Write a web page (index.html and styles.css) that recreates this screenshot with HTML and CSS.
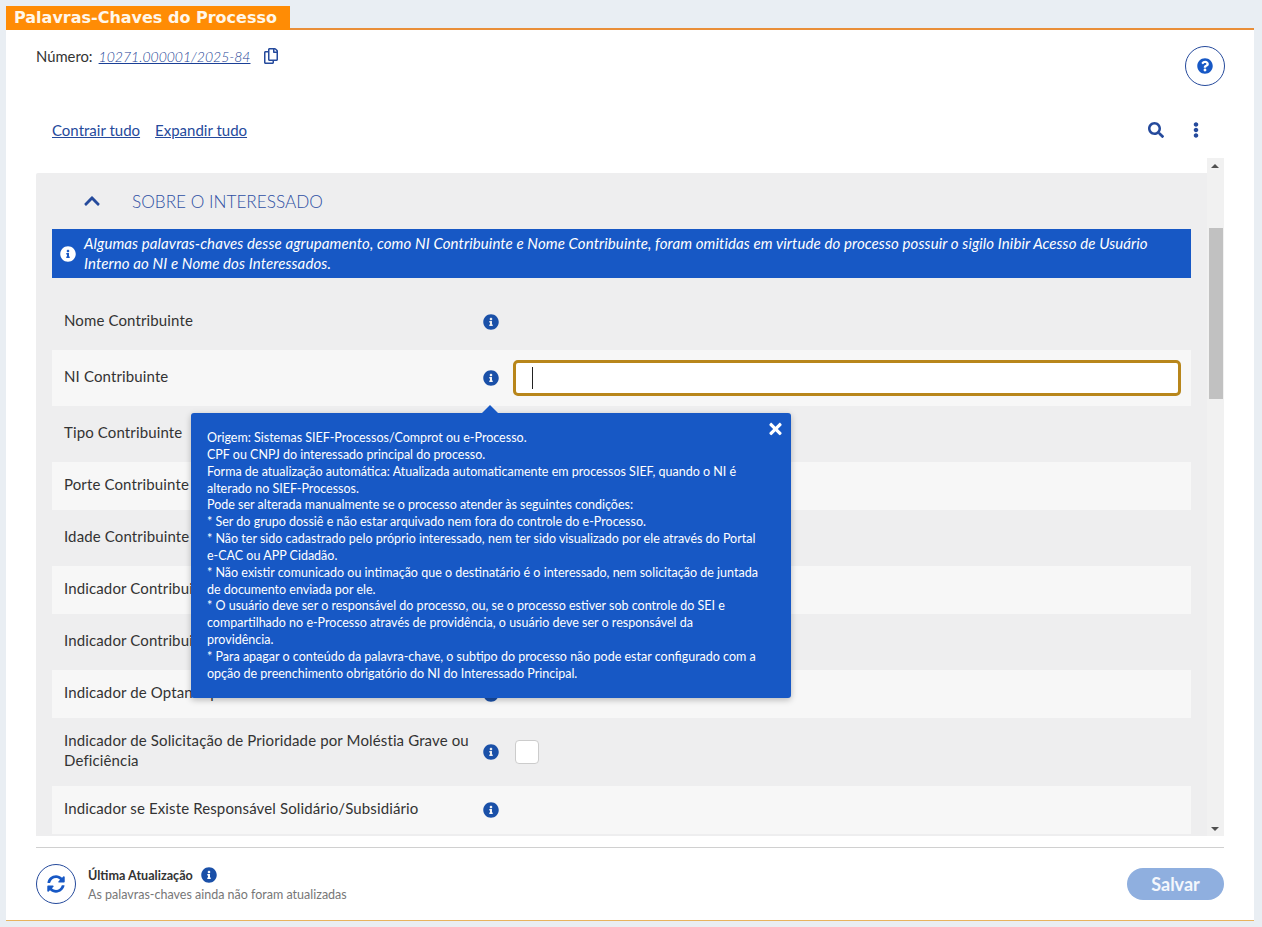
FILE: index.html
```html
<!DOCTYPE html>
<html lang="pt-BR">
<head>
<meta charset="utf-8">
<title>Palavras-Chaves do Processo</title>
<link rel="stylesheet" href="styles.css">
</head>
<body>
<svg class="defs" aria-hidden="true">
<symbol id="i-info" viewBox="0 0 512 512"><path fill="currentColor" d="M256 8C119.043 8 8 119.083 8 256c0 136.997 111.043 248 248 248s248-111.003 248-248C504 119.083 392.957 8 256 8zm0 110c23.196 0 42 18.804 42 42s-18.804 42-42 42-42-18.804-42-42 18.804-42 42-42zm56 254c0 6.627-5.373 12-12 12h-88c-6.627 0-12-5.373-12-12v-24c0-6.627 5.373-12 12-12h12v-64h-12c-6.627 0-12-5.373-12-12v-24c0-6.627 5.373-12 12-12h64c6.627 0 12 5.373 12 12v100h12c6.627 0 12 5.373 12 12v24z"/></symbol>
<symbol id="i-help" viewBox="0 0 512 512"><path fill="currentColor" d="M504 256c0 136.997-111.043 248-248 248S8 392.997 8 256C8 119.083 119.043 8 256 8s248 111.083 248 248zM262.655 90c-54.497 0-89.255 22.957-116.549 63.758-3.536 5.286-2.353 12.415 2.715 16.258l34.699 26.31c5.205 3.947 12.621 3.008 16.665-2.122 17.864-22.658 30.113-35.797 57.303-35.797 20.429 0 45.698 13.148 45.698 32.958 0 14.976-12.363 22.667-32.534 33.976C247.128 238.528 216 254.941 216 296v4c0 6.627 5.373 12 12 12h56c6.627 0 12-5.373 12-12v-1.333c0-28.462 83.186-29.647 83.186-106.667 0-58.002-60.165-102-116.531-102zM256 338c-25.365 0-46 20.635-46 46 0 25.364 20.635 46 46 46s46-20.636 46-46c0-25.365-20.635-46-46-46z"/></symbol>
<symbol id="i-search" viewBox="0 0 512 512"><path fill="currentColor" d="M505 442.7L405.3 343c-4.5-4.5-10.6-7-17-7H372c27.6-35.3 44-79.7 44-128C416 93.1 322.9 0 208 0S0 93.1 0 208s93.1 208 208 208c48.3 0 92.7-16.4 128-44v16.3c0 6.4 2.5 12.5 7 17l99.7 99.7c9.4 9.4 24.6 9.4 33.9 0l28.3-28.3c9.4-9.4 9.4-24.6.1-34zM208 336c-70.7 0-128-57.2-128-128 0-70.7 57.2-128 128-128 70.7 0 128 57.2 128 128 0 70.7-57.2 128-128 128z"/></symbol>
<symbol id="i-dots" viewBox="0 0 192 512"><path fill="currentColor" d="M96 184c39.8 0 72 32.2 72 72s-32.2 72-72 72-72-32.2-72-72 32.2-72 72-72zM24 80c0 39.8 32.2 72 72 72s72-32.2 72-72S135.8 8 96 8 24 40.2 24 80zm0 352c0 39.8 32.2 72 72 72s72-32.2 72-72-32.2-72-72-72-72 32.2-72 72z"/></symbol>
<symbol id="i-sync" viewBox="0 0 512 512"><path fill="currentColor" d="M370.72 133.28C339.458 104.008 298.888 87.962 255.848 88c-77.458.068-144.328 53.178-162.791 126.85-1.344 5.363-6.122 9.15-11.651 9.15H24.103c-7.498 0-13.194-6.807-11.807-14.176C33.933 94.924 134.813 8 256 8c66.448 0 126.791 26.136 171.315 68.685L463.03 40.97C478.149 25.851 504 36.559 504 57.941V192c0 13.255-10.745 24-24 24H345.941c-21.382 0-32.09-25.851-16.971-40.971l41.75-41.749zM32 296h134.059c21.382 0 32.09 25.851 16.971 40.971l-41.75 41.75c31.262 29.273 71.835 45.319 114.876 45.28 77.418-.07 144.315-53.144 162.787-126.849 1.344-5.363 6.122-9.15 11.651-9.15h57.304c7.498 0 13.194 6.807 11.807 14.176C478.067 417.076 377.187 504 256 504c-66.448 0-126.791-26.136-171.315-68.685L48.97 471.03C33.851 486.149 8 475.441 8 454.059V320c0-13.255 10.745-24 24-24z"/></symbol>
<symbol id="i-times" viewBox="0 0 352 512"><path fill="currentColor" d="M242.72 256l100.07-100.07c12.28-12.28 12.28-32.19 0-44.48l-22.24-22.24c-12.28-12.28-32.19-12.28-44.48 0L176 189.28 75.93 89.21c-12.28-12.28-32.19-12.28-44.48 0L9.21 111.45c-12.28 12.28-12.28 32.19 0 44.48L109.28 256 9.21 356.07c-12.28 12.28-12.28 32.19 0 44.48l22.24 22.24c12.28 12.28 32.2 12.28 44.48 0L176 322.72l100.07 100.07c12.28 12.28 32.2 12.28 44.48 0l22.24-22.24c12.28-12.28 12.28-32.19 0-44.48L242.72 256z"/></symbol>
<symbol id="i-up" viewBox="0 0 448 512"><path fill="currentColor" d="M240.971 130.524l194.343 194.343c9.373 9.373 9.373 24.569 0 33.941l-22.667 22.667c-9.357 9.357-24.522 9.375-33.901.04L224 227.495 69.255 381.516c-9.379 9.335-24.544 9.317-33.901-.04l-22.667-22.667c-9.373-9.373-9.373-24.569 0-33.941L207.03 130.525c9.372-9.373 24.568-9.373 33.941-.001z"/></symbol>
<symbol id="i-copy" viewBox="0 0 448 512"><path fill="currentColor" d="M433.941 65.941l-51.882-51.882A48 48 0 0 0 348.118 0H176c-26.51 0-48 21.49-48 48v48H48c-26.51 0-48 21.49-48 48v320c0 26.51 21.49 48 48 48h224c26.51 0 48-21.49 48-48v-48h80c26.51 0 48-21.49 48-48V99.882a48 48 0 0 0-14.059-33.941zM266 464H54a6 6 0 0 1-6-6V150a6 6 0 0 1 6-6h74v224c0 26.51 21.49 48 48 48h96v42a6 6 0 0 1-6 6zm128-96H182a6 6 0 0 1-6-6V54a6 6 0 0 1 6-6h106v88c0 13.255 10.745 24 24 24h88v202a6 6 0 0 1-6 6zm6-256h-64V48h9.632c1.591 0 3.117.632 4.243 1.757l48.368 48.368a6 6 0 0 1 1.757 4.243V112z"/></symbol>
</svg>

<main class="window">
  <h1 class="tab"><span class="tab-label">Palavras-Chaves do Processo</span></h1>
  <section class="card">
    <div class="top">
      <div class="numero">
        <span class="numero-label">Número:</span>
        <a class="numero-link" href="#">10271.000001/2025-84</a>
        <svg class="icon-copy"><use href="#i-copy"/></svg>
      </div>
      <button class="help" type="button"><svg class="icon-help"><use href="#i-help"/></svg></button>
    </div>
    <div class="toolbar">
      <div class="toolbar-links"><a href="#">Contrair tudo</a><a href="#">Expandir tudo</a></div>
      <div class="toolbar-icons">
        <svg class="icon-search"><use href="#i-search"/></svg>
        <svg class="icon-dots"><use href="#i-dots"/></svg>
      </div>
    </div>
    <div class="scroller">
      <div class="content">
        <div class="panel">
          <div class="panel-head">
            <svg class="icon-up"><use href="#i-up"/></svg>
            <h2>SOBRE O INTERESSADO</h2>
          </div>
          <div class="banner">
            <svg class="icon-banner"><use href="#i-info"/></svg>
            <p>Algumas palavras-chaves desse agrupamento, como NI Contribuinte e Nome Contribuinte, foram omitidas em virtude do processo possuir o sigilo Inibir Acesso de Usuário<br>Interno ao NI e Nome dos Interessados.</p>
          </div>
          <div class="rows">
            <div class="row"><span class="label">Nome Contribuinte</span><svg class="info"><use href="#i-info"/></svg></div>
            <div class="row light"><span class="label">NI Contribuinte</span><svg class="info"><use href="#i-info"/></svg><div class="field"><span class="caret"></span></div></div>
            <div class="row"><span class="label">Tipo Contribuinte</span><svg class="info"><use href="#i-info"/></svg></div>
            <div class="row light short"><span class="label">Porte Contribuinte</span><svg class="info"><use href="#i-info"/></svg></div>
            <div class="row"><span class="label">Idade Contribuinte</span><svg class="info"><use href="#i-info"/></svg></div>
            <div class="row light short"><span class="label">Indicador Contribuinte Falecido</span><svg class="info"><use href="#i-info"/></svg></div>
            <div class="row"><span class="label">Indicador Contribuinte Isento</span><svg class="info"><use href="#i-info"/></svg></div>
            <div class="row light short"><span class="label">Indicador de Optante pelo MEI</span><svg class="info"><use href="#i-info"/></svg></div>
            <div class="row tall"><span class="label">Indicador de Solicitação de Prioridade por Moléstia Grave ou Deficiência</span><svg class="info"><use href="#i-info"/></svg><span class="check"></span></div>
            <div class="row light short"><span class="label">Indicador se Existe Responsável Solidário/Subsidiário</span><svg class="info"><use href="#i-info"/></svg></div>
          </div>
        </div>
      </div>
      <div class="scrollbar">
        <span class="arrow arrow-up"></span>
        <span class="thumb"></span>
        <span class="arrow arrow-down"></span>
      </div>
    </div>
    <footer class="footer">
      <button class="refresh" type="button"><svg class="icon-sync"><use href="#i-sync"/></svg></button>
      <div class="update">
        <div class="update-title"><strong>Última Atualização</strong><svg class="info"><use href="#i-info"/></svg></div>
        <div class="update-note">As palavras-chaves ainda não foram atualizadas</div>
      </div>
      <button class="save" type="button">Salvar</button>
    </footer>
  </section>

  <aside class="popover">
    <svg class="icon-times"><use href="#i-times"/></svg>
    <p>Origem: Sistemas SIEF-Processos/Comprot ou e-Processo.</p>
    <p>CPF ou CNPJ do interessado principal do processo.</p>
    <p>Forma de atualização automática: Atualizada automaticamente em processos SIEF, quando o NI é</p>
    <p>alterado no SIEF-Processos.</p>
    <p>Pode ser alterada manualmente se o processo atender às seguintes condições:</p>
    <p>* Ser do grupo dossiê e não estar arquivado nem fora do controle do e-Processo.</p>
    <p>* Não ter sido cadastrado pelo próprio interessado, nem ter sido visualizado por ele através do Portal</p>
    <p>e-CAC ou APP Cidadão.</p>
    <p>* Não existir comunicado ou intimação que o destinatário é o interessado, nem solicitação de juntada</p>
    <p>de documento enviada por ele.</p>
    <p>* O usuário deve ser o responsável do processo, ou, se o processo estiver sob controle do SEI e</p>
    <p>compartilhado no e-Processo através de providência, o usuário deve ser o responsável da</p>
    <p>providência.</p>
    <p>* Para apagar o conteúdo da palavra-chave, o subtipo do processo não pode estar configurado com a</p>
    <p>opção de preenchimento obrigatório do NI do Interessado Principal.</p>
  </aside>
</main>
</body>
</html>
```
FILE: styles.css
```css
* { box-sizing: border-box; }
html, body { margin: 0; height: 100%; }
body {
  background: #e9eef3;
  color: #333;
  font-family: "Lato", "Liberation Sans", sans-serif;
  font-size: 15px;
  overflow: hidden;
}
.defs { display: none; }
svg { display: block; flex: none; }
a { color: #254a9c; }
button { border: 0; padding: 0; background: none; font: inherit; }

.window { position: relative; height: 927px; padding: 6px 8px 0 6px; }

.tab {
  margin: 0;
  height: 24px;
  border-bottom: 2px solid #e98e38;
  font-size: 16px;
  line-height: 23px;
}
.tab-label {
  display: block;
  width: 284px;
  height: 24px;
  padding-left: 8px;
  background: #ff8c05;
  color: #fff7ea;
  font-family: "DejaVu Sans", sans-serif;
  font-weight: 700;
  white-space: nowrap;
}

.card {
  height: 891px;
  padding: 0 30px;
  background: #fff;
  border-bottom: 1px solid #e8b35e;
}

.top { display: flex; justify-content: space-between; height: 76px; padding-top: 16px; }
.numero { display: flex; gap: 6px; height: 22px; align-items: center; color: #333; }
.numero-label { font-size: 14.8px; line-height: 20px; margin-top: -2px; }
.numero-link { font-size: 14px; font-style: italic; font-weight: 300; margin-top: -2px; color: #1a3f96; }
.icon-copy { width: 14px; height: 16px; margin-left: 8px; margin-top: -2px; color: #254a9c; }
.help {
  width: 40px; height: 40px; margin-right: -1px;
  border: 1px solid #254a9c; border-radius: 50%;
  display: flex; align-items: center; justify-content: center;
}
.icon-help { width: 16px; height: 16px; color: #1758c5; }

.toolbar { display: flex; justify-content: space-between; align-items: center; height: 52px; padding: 0 25px 4px 16px; }
.toolbar-links { display: flex; gap: 15px; }
.toolbar-icons { display: flex; gap: 29px; align-items: center; }
.icon-search { width: 16px; height: 16px; color: #254a9c; }
.icon-dots { width: 6px; height: 16px; color: #254a9c; }

.scroller { display: flex; height: 678px; }
.content { flex: 1; min-width: 0; padding-top: 15px; overflow: hidden; }
.panel { height: 663px; background: #eeeeef; padding: 0 16px; border-radius: 2px 0 0 0; overflow: hidden; }
.panel-head { display: flex; align-items: center; height: 56px; padding-left: 32px; }
.icon-up { width: 16px; height: 18px; color: #254a9c; }
.panel-head h2 { margin: 0 0 0 32px; font-size: 17.2px; font-weight: 300; color: #2f50a4; }

.banner {
  display: flex; align-items: center; gap: 8px;
  height: 49px; padding-left: 8px;
  background: #1758c5; color: #fff;
}
.banner p { margin: -1px 0 0; line-height: 20px; font-style: italic; letter-spacing: .1px; white-space: nowrap; }
.icon-banner { width: 16px; height: 16px; color: #fff; }

.rows { margin-top: 16px; }
.row { display: flex; align-items: center; height: 56px; padding-left: 12px; }
.row.light { background: #f7f7f7; }
.row.short { height: 48px; }
.row.tall { height: 68px; }
.label { width: 419px; padding: 0 12px 4px 0; line-height: 20px; letter-spacing: .13px; color: #333; flex: none; }
.info { width: 16px; height: 16px; color: #1a50a8; }
.field {
  flex: none; width: 668px; height: 36px; margin-left: 14px;
  background: #fff; border: 3px solid #b8861b; border-radius: 5px;
  display: flex; align-items: center; padding-left: 16px;
}
.caret { width: 1px; height: 22px; background: #222; }
.check { width: 24px; height: 24px; margin-left: 16px; background: #fff; border: 1px solid #ccc; border-radius: 4px; }

.scrollbar { width: 17px; background: #f1f1f1; position: relative; }
.thumb { position: absolute; top: 70px; left: 2px; width: 14px; height: 171px; background: #c1c1c1; }
.arrow { position: absolute; left: 4px; width: 0; height: 0; border-left: 4px solid transparent; border-right: 4px solid transparent; }
.arrow-up { top: 6px; border-bottom: 4px solid #505050; }
.arrow-down { bottom: 5px; border-top: 4px solid #505050; }

.footer {
  display: flex; align-items: center; height: 73px;
  margin-top: 11px; border-top: 1px solid #d0d0d0;
}
.refresh {
  width: 40px; height: 40px; flex: none;
  border: 1px solid #254a9c; border-radius: 50%;
  display: flex; align-items: center; justify-content: center;
}
.icon-sync { width: 18px; height: 18px; color: #1758c5; }
.update { margin-left: 12px; flex: 1; }
.update-title { display: flex; align-items: center; gap: 8px; height: 18px; }
.update-title strong { font-size: 12.6px; font-weight: 700; color: #333; }
.update-note { margin-top: 3px; font-size: 12.5px; color: #777; }
.save {
  width: 97px; height: 32px;
  border-radius: 16px; background: #8fafdf; color: #f4f7fc;
  font-size: 18px; font-weight: 700;
}

.popover {
  position: absolute; left: 191px; top: 413px;
  width: 600px; height: 285px;
  padding: 17px 16px 0;
  background: #1758c5; color: #fff;
  border-radius: 3px;
  font-size: 12.5px; line-height: 16.85px;
  box-shadow: 0 2px 6px rgba(0, 0, 0, .25);
}
.popover::before {
  content: ""; position: absolute; left: 291px; top: -8px;
  border-left: 8px solid transparent; border-right: 8px solid transparent;
  border-bottom: 8px solid #1758c5;
}
.popover p { margin: 0; white-space: nowrap; }
.icon-times { position: absolute; right: 9px; top: 7px; width: 13px; height: 18px; color: #fff; }
```
